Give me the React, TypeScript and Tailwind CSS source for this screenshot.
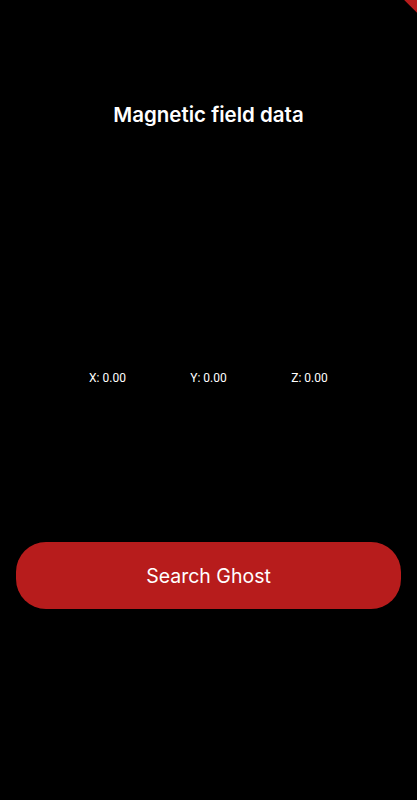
import React from "react";

function App() {
  const axes = [
    { label: "X", value: 0 },
    { label: "Y", value: 0 },
    { label: "Z", value: 0 },
  ];

  return (
    <div className="relative w-full min-h-[800px] bg-black overflow-hidden font-['Inter','Noto_Sans',sans-serif]">
      {/* debug banner corner */}
      <div className="absolute -right-[35px] -top-[26px] w-[80px] h-[28px] bg-[#b71c1c] rotate-45" />

      <div className="flex flex-col items-center pt-[101px]">
        <h1 className="text-white text-[20.5px] leading-[28px] font-semibold">
          Magnetic field data
        </h1>

        <div className="grid grid-cols-3 w-[303px] mt-[241px]">
          {axes.map((a) => (
            <p
              key={a.label}
              className="text-white text-center text-[12px] leading-[16px] font-['Roboto',sans-serif]"
            >
              {a.label}: {a.value.toFixed(2)}
            </p>
          ))}
        </div>

        <div className="w-full px-4 mt-[156px]">
          <button className="w-full h-[67px] pt-[3px] rounded-[30px] bg-[#b71c1c] text-white text-[19.5px]">
            Search Ghost
          </button>
        </div>
      </div>
    </div>
  );
}

export default App;
